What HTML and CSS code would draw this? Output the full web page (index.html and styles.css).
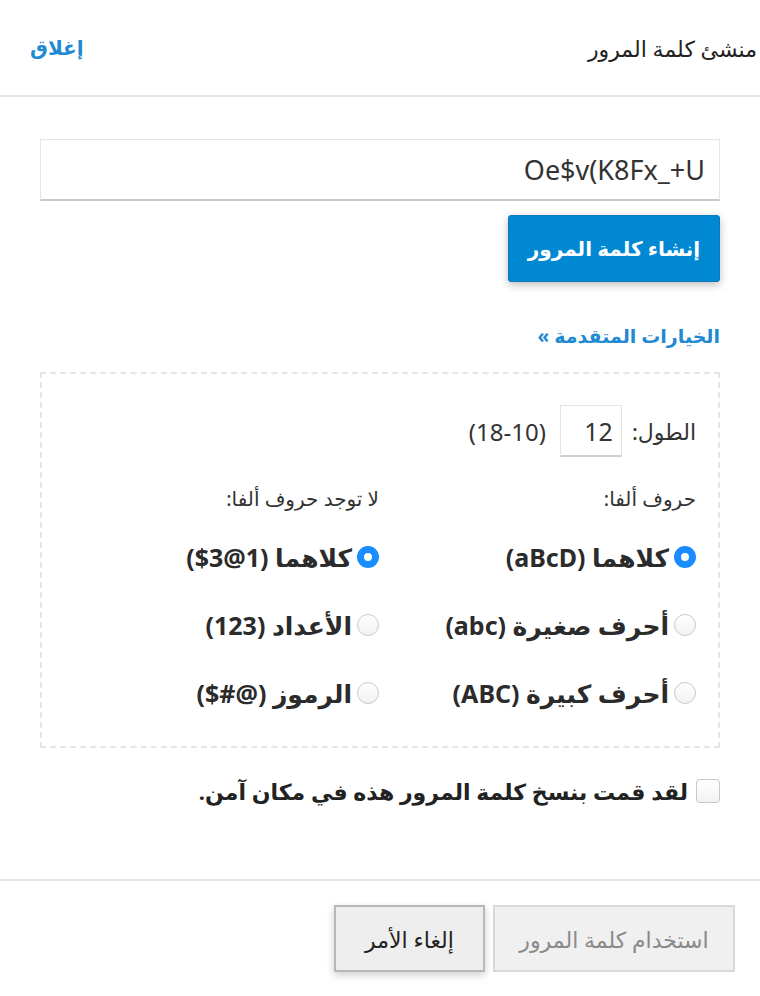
FILE: index.html
```html
<!DOCTYPE html>
<html lang="ar" dir="rtl">
<head>
<meta charset="utf-8">
<title>منشئ كلمة المرور</title>
<link rel="stylesheet" href="styles.css">
</head>
<body>
<div class="dialog">
  <header class="head">
    <h1 class="title">منشئ كلمة المرور</h1>
    <a class="close" href="#">إغلاق</a>
  </header>
  <main class="body">
    <div class="pw-field">Oe$v(K8Fx_+U</div>
    <div class="gen-row"><button class="btn-primary">إنشاء كلمة المرور</button></div>
    <a class="adv" href="#">الخيارات المتقدمة »</a>
    <section class="options">
      <div class="len-row">
        <span class="lbl">الطول:</span>
        <span class="num-box">12</span>
        <span class="range">(18-10)</span>
      </div>
      <div class="cols">
        <div class="col">
          <div class="col-title">حروف ألفا:</div>
          <label class="opt"><span class="radio on"></span><span>كلاهما (aBcD)</span></label>
          <label class="opt"><span class="radio"></span><span>أحرف صغيرة (abc)</span></label>
          <label class="opt"><span class="radio"></span><span>أحرف كبيرة (ABC)</span></label>
        </div>
        <div class="col">
          <div class="col-title">لا توجد حروف ألفا:</div>
          <label class="opt"><span class="radio on"></span><span>كلاهما (1@3$)</span></label>
          <label class="opt"><span class="radio"></span><span>الأعداد (123)</span></label>
          <label class="opt"><span class="radio"></span><span>الرموز (@#$)</span></label>
        </div>
      </div>
    </section>
    <label class="confirm"><span class="check"></span><span>لقد قمت بنسخ كلمة المرور هذه في مكان آمن.</span></label>
  </main>
  <footer class="foot">
    <button class="btn use" disabled>استخدام كلمة المرور</button>
    <button class="btn cancel">إلغاء الأمر</button>
  </footer>
</div>
</body>
</html>
```
FILE: styles.css
```css
html, body {
  margin: 0;
  padding: 0;
  background: #fff;
}
body {
  font-family: "Noto Sans", "DejaVu Sans", sans-serif;
  color: #333;
  direction: rtl;
}
.dialog {
  width: 760px;
  height: 996px;
  display: flex;
  flex-direction: column;
}
.head {
  height: 97px;
  box-sizing: border-box;
  border-bottom: 2px solid #e4e4e4;
  display: flex;
  align-items: center;
  justify-content: space-between;
  padding: 0 3px 0 30px;
}
.title {
  margin: 0;
  font-size: 22px;
  font-weight: normal;
  color: #222;
}
.close {
  color: #1f8ad2;
  text-decoration: none;
  font-size: 20px;
  font-weight: bold;
}
.body {
  padding: 42px 40px 0 40px;
  flex: 1;
}
.pw-field {
  border: 1px solid #e6e6e6;
  border-bottom: 2px solid #c8c8c8;
  box-sizing: border-box;
  height: 62px;
  display: flex;
  align-items: center;
  justify-content: flex-end;
  padding: 0 14px;
  font-size: 27px;
  color: #333;
  direction: ltr;
}
.gen-row {
  margin-top: 14px;
  display: flex;
}
.btn-primary {
  width: 212px;
  height: 67px;
  background: #0088d3;
  color: #fff;
  border: 1px solid #0a78bb;
  border-radius: 3px;
  font-family: inherit;
  font-size: 20px;
  font-weight: bold;
  box-shadow: 0 3px 8px rgba(0,0,0,0.25);
}
.adv {
  display: block;
  margin-top: 38px;
  color: #1f8ad2;
  text-decoration: none;
  font-size: 19px;
  font-weight: bold;
  line-height: 32px;
}
.options {
  margin-top: 20px;
  border: 2px dashed #e6e6e6;
  height: 376px;
  box-sizing: border-box;
  padding: 31px 22px 0 20px;
}
.len-row {
  display: flex;
  align-items: center;
  gap: 10px;
  font-size: 22px;
}
.lbl {
  font-weight: normal;
  color: #333;
}
.num-box {
  width: 62px;
  height: 52px;
  box-sizing: border-box;
  border: 1px solid #e4e4e4;
  border-bottom: 2px solid #cfcfcf;
  display: flex;
  align-items: center;
  justify-content: flex-end;
  padding: 0 8px;
  font-size: 25px;
  direction: ltr;
}
.range {
  font-size: 24px;
  direction: ltr;
  unicode-bidi: isolate;
  margin-right: 4px;
}
.cols {
  margin-top: 26px;
  display: grid;
  grid-template-columns: 1fr 1fr;
}
.col-title {
  font-size: 20px;
  font-weight: normal;
  line-height: 32px;
  margin-bottom: 25px;
}
.opt {
  display: flex;
  align-items: center;
  gap: 5px;
  font-size: 25px;
  font-weight: bold;
  color: #2b2b2b;
  height: 34px;
  margin-bottom: 34px;
}
.radio {
  width: 22px;
  height: 22px;
  border-radius: 50%;
  box-sizing: border-box;
  border: 1px solid #c9c9c9;
  background: linear-gradient(#fff, #f2f2f2);
  flex: none;
}
.radio.on {
  border: 7px solid #1a8cff;
  background: #fff;
}
.confirm {
  margin-top: 28px;
  display: flex;
  align-items: center;
  gap: 8px;
  font-size: 22px;
  font-weight: bold;
  color: #222;
}
.check {
  width: 24px;
  height: 24px;
  box-sizing: border-box;
  border: 1px solid #c8c8c8;
  border-radius: 4px;
  background: linear-gradient(#fff, #f3f3f3);
  flex: none;
}
.foot {
  height: 117px;
  box-sizing: border-box;
  border-top: 2px solid #e4e4e4;
  display: flex;
  align-items: flex-start;
  padding: 24px 25px 0 0;
  gap: 8px;
}
.btn {
  height: 67px;
  font-family: inherit;
  font-size: 22px;
  border-radius: 0;
}
.use {
  width: 242px;
  background: #f0f0f0;
  border: 2px solid #d8d8d8;
  color: #8a8a8a;
}
.cancel {
  width: 151px;
  background: #eeeeee;
  border: 2px solid #b8b8b8;
  color: #222;
  box-shadow: 0 3px 8px rgba(0,0,0,0.2);
}
```
